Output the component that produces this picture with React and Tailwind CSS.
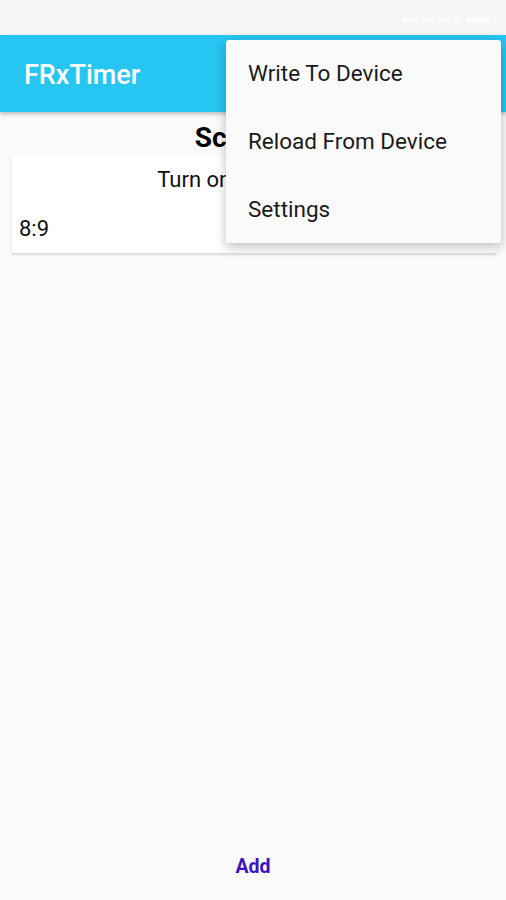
export default function App() {
  return (
    <div className="relative w-[506px] h-[900px] bg-[#fafafa] overflow-hidden" style={{ fontFamily: "Roboto, 'Noto Sans', sans-serif" }}>
      {/* status bar */}
      <div className="h-[35px] bg-[#f6f6f6] flex items-center justify-end pr-4 pt-[4px]">
        <div className="flex items-center gap-[6px] opacity-60">
          <div className="w-[14px] h-[5px] bg-white rounded-sm" />
          <div className="w-[10px] h-[5px] bg-white rounded-sm" />
          <div className="w-[10px] h-[5px] bg-white rounded-sm" />
          <div className="w-[6px] h-[6px] bg-white rounded-full" />
          <div className="w-[24px] h-[5px] bg-white rounded-sm" />
        </div>
      </div>
      {/* app bar */}
      <div className="h-[77px] bg-[#27c6f2] flex items-center px-6 pt-[3px] shadow-[0_2px_4px_rgba(0,0,0,0.25)] relative z-10">
        <span className="text-white text-[27px] font-medium leading-[32px]">FRxTimer</span>
      </div>
      {/* content */}
      <div className="flex flex-col">
        <div className="h-[44px] flex items-end justify-center">
          <span className="text-[28px] font-bold text-black leading-[36px]">Schedule</span>
        </div>
        <div className="ml-3 mr-[9px] bg-white h-[97px] shadow-[0_2px_2px_rgba(0,0,0,0.12)] flex flex-col pt-[9px] px-[7px]">
          <div className="text-center text-[22px] text-[#111] leading-[30px]">Turn on Sprinklers 1</div>
          <div className="text-[22px] text-[#111] leading-[30px] mt-[19px]">8:9</div>
        </div>
      </div>
      {/* add button */}
      <div className="absolute left-0 right-0 top-[853px] flex justify-center">
        <span className="text-[19.5px] font-bold text-[#3a12c4] leading-[28px]">Add</span>
      </div>
      {/* overflow menu */}
      <div className="absolute left-[226px] top-[40px] w-[275px] bg-[#fafafa] rounded-[3px] shadow-[0_4px_12px_rgba(0,0,0,0.25)] z-20 flex flex-col">
        <div className="h-[68px] flex items-center px-[22px] text-[22.5px] text-[#1a1a1a]">Write To Device</div>
        <div className="h-[68px] flex items-center px-[22px] text-[22.5px] text-[#1a1a1a]">Reload From Device</div>
        <div className="h-[67px] flex items-center px-[22px] text-[22.5px] text-[#1a1a1a]">Settings</div>
      </div>
    </div>
  );
}
